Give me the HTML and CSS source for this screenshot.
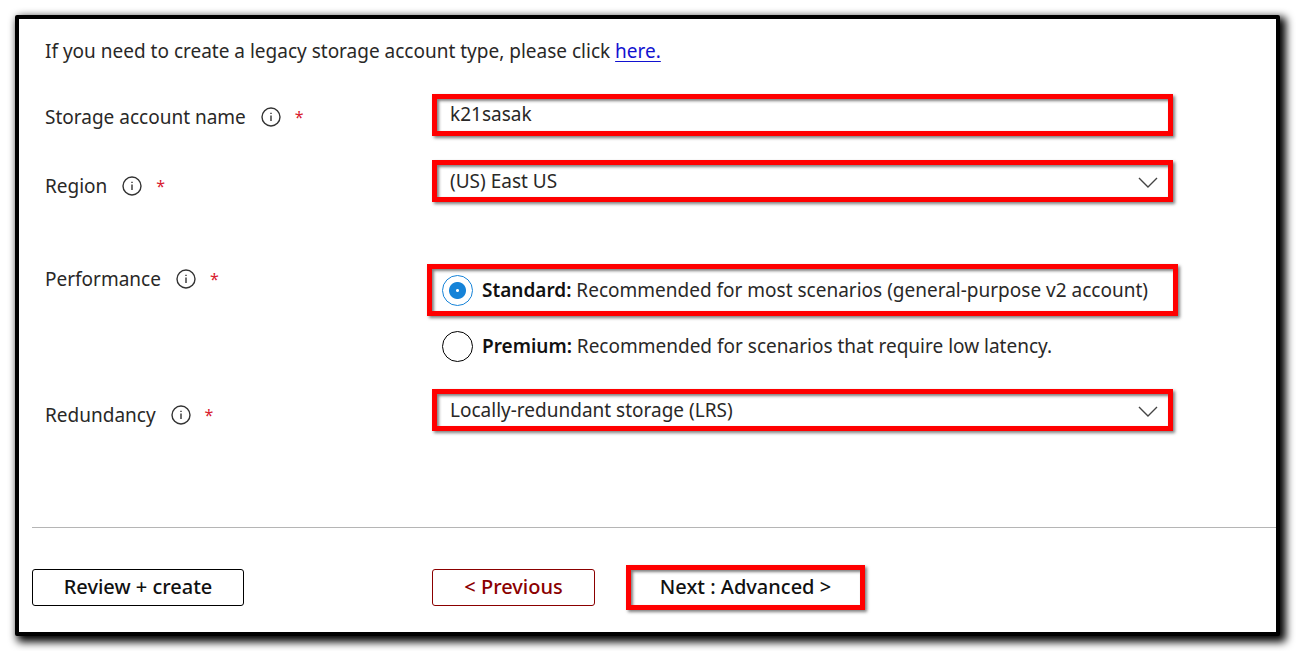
FILE: index.html
```html
<!DOCTYPE html>
<html lang="en">
<head>
    <meta charset="UTF-8">
    <title>Create a storage account</title>
    <link rel="stylesheet" href="styles.css">
</head>
<body>
    <form class="panel">
        <div class="fields">
            <p class="intro">If you need to create a legacy storage account type, please click <a href="#">here.</a></p>

            <div class="row row-name">
                <div class="label">
                    <label for="account_name">Storage account name</label>
                    <svg class="info" viewBox="0 0 20 20"><circle cx="10" cy="10" r="9"/><path d="M10 8.5v5.5M10 5.7v1.4"/></svg>
                    <span class="star">*</span>
                </div>
                <input type="text" id="account_name" class="box" value="k21sasak">
            </div>

            <div class="row row-region">
                <div class="label">
                    <label for="region">Region</label>
                    <svg class="info" viewBox="0 0 20 20"><circle cx="10" cy="10" r="9"/><path d="M10 8.5v5.5M10 5.7v1.4"/></svg>
                    <span class="star">*</span>
                </div>
                <div class="select">
                    <select id="region" class="box">
                        <option>(US) East US</option>
                    </select>
                    <svg class="arrow" viewBox="0 0 20 11"><path d="M1 1l9 9 9-9"/></svg>
                </div>
            </div>

            <div class="row row-performance" role="radiogroup" aria-labelledby="performance">
                <div class="label">
                    <span id="performance">Performance</span>
                    <svg class="info" viewBox="0 0 20 20"><circle cx="10" cy="10" r="9"/><path d="M10 8.5v5.5M10 5.7v1.4"/></svg>
                    <span class="star">*</span>
                </div>
                <div class="options">
                    <label class="option marked"><input type="radio" name="performance" checked><span><b>Standard:</b> Recommended for most scenarios (general-purpose v2 account)</span></label>
                    <label class="option"><input type="radio" name="performance"><span><b>Premium:</b> Recommended for scenarios that require low latency.</span></label>
                </div>
            </div>

            <div class="row row-redundancy">
                <div class="label">
                    <label for="redundancy">Redundancy</label>
                    <svg class="info" viewBox="0 0 20 20"><circle cx="10" cy="10" r="9"/><path d="M10 8.5v5.5M10 5.7v1.4"/></svg>
                    <span class="star">*</span>
                </div>
                <div class="select">
                    <select id="redundancy" class="box">
                        <option>Locally-redundant storage (LRS)</option>
                    </select>
                    <svg class="arrow" viewBox="0 0 20 11"><path d="M1 1l9 9 9-9"/></svg>
                </div>
            </div>
        </div>

        <div class="buttons">
            <div class="first"><button type="button" class="btn review">Review + create</button></div>
            <button type="button" class="btn previous">&lt; Previous</button>
            <button type="button" class="btn next">Next : Advanced &gt;</button>
        </div>
    </form>
</body>
</html>
```
FILE: styles.css
```css
* { box-sizing: border-box; }
body {
    margin: 0;
    padding: 15px 27px 15px 15px;
    background: #fff;
    color: #292827;
    font-family: "Noto Sans", sans-serif;
    font-size: 19px;
    line-height: 28px;
}
.panel {
    border: 4px solid #000;
    border-radius: 2px;
    background: #fff;
    box-shadow: 4px 4px 8px 2px #000;
}
.fields { padding: 18px 103px 96px 26px; }
.intro { margin: 0 0 29px; }
.intro a { color: #1212d0; text-decoration-thickness: 1px; text-underline-offset: 3px; }

.row { display: grid; grid-template-columns: 387px 1fr; align-items: start; }
.row-name { margin-bottom: 24px; }
.row-region { margin-bottom: 62px; }
.row-performance { margin-bottom: 17px; }
.label { display: flex; align-items: center; padding-top: 12px; }
.row-name .label { padding-top: 9px; }
.row-performance .label { padding-top: 1px; }
.info { width: 20px; height: 20px; margin: 0 14px 0 15px; fill: none; stroke: #333; stroke-width: 1.4; }
.star { color: #d8202f; font-size: 16px; }

.box, .marked, .next {
    border: 5px solid red;
    border-radius: 0;
    box-shadow: 2px 2px 3px rgba(0, 0, 0, 0.5), inset 2px 2px 3px rgba(0, 0, 0, 0.5);
}
.box {
    display: block;
    width: 100%;
    height: 42px;
    padding: 0 13px;
    background: #fff;
    color: #292827;
    font: inherit;
    appearance: none;
}
input.box { padding-bottom: 2px; }
.select { position: relative; }
.arrow {
    position: absolute;
    right: 15px;
    top: 17px;
    width: 20px;
    height: 11px;
    fill: none;
    stroke: #444;
    stroke-width: 1.4;
    pointer-events: none;
}

.options { margin: 0 -5px; }
.option { display: flex; align-items: center; gap: 9px; height: 52px; padding: 0 15px; white-space: nowrap; }
.marked { padding: 0 10px; margin-bottom: 4px; }
.option b { color: #111; font-weight: 600; }
.option input {
    appearance: none;
    flex: none;
    width: 31px;
    height: 31px;
    margin: 0;
    border: 1px solid black;
    border-radius: 50%;
}
.option input:checked {
    border-color: #1683d8;
    background: radial-gradient(circle, #fff 1px, #1683d8 2px, #1683d8 8px, #fff 9px);
}

.buttons {
    display: flex;
    align-items: center;
    margin-left: 13px;
    padding: 37px 0 22px;
    border-top: 1px solid #b5b5b5;
}
.first { width: 400px; line-height: 0; }
.btn {
    height: 37px;
    padding: 0 0 2px;
    border: 1px solid black;
    border-radius: 3px;
    background: #fff;
    color: #111;
    font: inherit;
    font-size: 20px;
    font-weight: 500;
}
.review { width: 212px; }
.previous { width: 163px; margin-right: 31px; border-color: #8b0000; color: #8b0000; }
.next { width: 239px; height: 45px; border: 5px solid red; border-radius: 0; }
```
